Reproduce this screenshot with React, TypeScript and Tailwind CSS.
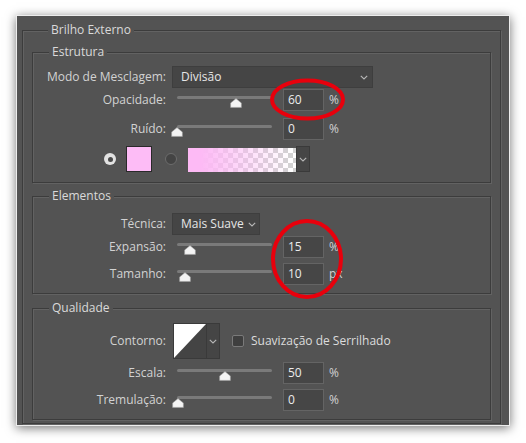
import type { ReactNode } from "react";

const font = { fontFamily: '"Open Sans", "Noto Sans", sans-serif' };

function Chevron({ className = "" }: { className?: string }) {
  return (
    <svg width="8" height="5" viewBox="0 0 8 5" className={className}>
      <path d="M0.8 0.8 L4 4 L7.2 0.8" fill="none" stroke="#b8b8b8" strokeWidth="1.1" />
    </svg>
  );
}

function Thumb({ x }: { x: number }) {
  return (
    <svg
      width="12"
      height="10"
      viewBox="0 0 12 10"
      className="absolute top-[9px]"
      style={{ left: x - 6 }}
    >
      <path d="M6 0.6 L11.4 5 L11.4 9.4 L0.6 9.4 L0.6 5 Z" fill="#f4f4f4" stroke="#9a9a9a" strokeWidth="0.6" strokeLinejoin="round" />
    </svg>
  );
}

function Label({ children }: { children?: ReactNode }) {
  return <span className="w-[133px] shrink-0 text-right text-[12px] text-[#d2d2d2]">{children}</span>;
}

function SliderRow({
  label,
  value,
  unit,
  thumb,
  className = "",
}: {
  label: string;
  value: string;
  unit: string;
  thumb: number;
  className?: string;
}) {
  return (
    <div className={`flex h-[22px] items-center ${className}`}>
      <Label>{label}</Label>
      <div className="relative ml-[6px] h-[22px] w-[106px]">
        <div className="absolute left-[5px] top-[7px] h-[3px] w-[95px] rounded-sm bg-[#7a7a7a]" />
        <Thumb x={thumb} />
      </div>
      <div className="ml-[5px] flex h-[22px] w-[41px] items-center border border-[#646464] bg-[#464646] pl-[4px] text-[12px] text-[#ececec]">
        {value}
      </div>
      <span className="ml-[5px] text-[12px] text-[#d2d2d2]">{unit}</span>
    </div>
  );
}

function Group({ title, children, className = "" }: { title: string; children: ReactNode; className?: string }) {
  return (
    <fieldset
      className={`border border-[#3c3c3c] shadow-[inset_1px_1px_0_#626262,1px_1px_0_#626262] ${className}`}
    >
      <legend className="ml-[16px] bg-[#535353] px-[3px] text-[12px] leading-[16px] text-[#dadada]">{title}</legend>
      {children}
    </fieldset>
  );
}

export default function App() {
  return (
    <div className="relative h-[443px] w-[526px] bg-white pl-[16px] pt-[15px]" style={font}>
      <div className="w-[494px] border border-[#ededed] bg-[#535353] pb-[1px] pt-[6px] shadow-[0_2px_10px_rgba(0,0,0,0.55)]">
        <fieldset className="ml-[5px] w-[479px] border border-[#3c3c3c] px-[9px] pb-[3px] shadow-[inset_1px_1px_0_#626262,1px_1px_0_#626262]">
          <legend className="ml-[16px] bg-[#535353] px-[3px] text-[12px] leading-[16px] text-[#dadada]">
            Brilho Externo
          </legend>

          {/* Estrutura */}
          <Group title="Estrutura" className="mt-[6px] pb-[10px]">
            <div className="mt-[6px] flex h-[22px] items-center">
              <Label>Modo de Mesclagem:</Label>
              <div className="ml-[6px] flex h-[22px] w-[201px] items-center justify-between border border-[#3e3e3e] bg-[#454545] pl-[8px] pr-[4px] text-[12px] text-[#e6e6e6]">
                <span>Divisão</span>
                <Chevron />
              </div>
            </div>
            <SliderRow label="Opacidade:" value="60" unit="%" thumb={64} className="mt-[1px]" />
            <SliderRow label="Ruído:" value="0" unit="%" thumb={5} className="mt-[7px]" />
            <div className="mt-[6px] flex h-[26px] items-center pl-[71px]">
              <div className="flex h-[12px] w-[12px] items-center justify-center rounded-full bg-[#e2e2e2]">
                <div className="h-[5px] w-[5px] rounded-full bg-[#4a4a4a]" />
              </div>
              <div className="ml-[10px] h-[26px] w-[26px] border border-[#2a2a2a] bg-[#fdbcf6]" />
              <div className="ml-[13px] h-[12px] w-[12px] rounded-full border border-[#6c6c6c] bg-[#444444]" />
              <div className="ml-[11px] flex h-[26px] items-stretch">
                <div className="mt-[2px] h-[24px] w-[108px] bg-[linear-gradient(to_right,#fdbaf5_12%,rgba(253,186,245,0)_96%),repeating-conic-gradient(#d2d2d2_0%_25%,#ffffff_0%_50%)] [background-size:100%_100%,10px_10px]" />
                <div className="flex w-[14px] items-center justify-center border border-[#3a3a3a] bg-[#464646]">
                  <Chevron />
                </div>
              </div>
            </div>
          </Group>

          {/* Elementos */}
          <Group title="Elementos" className="mt-[5px] pb-[8px]">
            <div className="mt-[9px] flex h-[22px] items-center">
              <Label>Técnica:</Label>
              <div className="ml-[6px] flex h-[22px] w-[88px] items-center justify-between border border-[#3e3e3e] bg-[#454545] pl-[8px] pr-[3px] text-[12px] text-[#e6e6e6]">
                <span>Mais Suave</span>
                <Chevron />
              </div>
            </div>
            <SliderRow label="Expansão:" value="15" unit="%" thumb={18} className="mt-[1px]" />
            <SliderRow label="Tamanho:" value="10" unit="px" thumb={13} className="mt-[5px]" />
          </Group>

          {/* Qualidade */}
          <Group title="Qualidade" className="mt-[6px] pb-[8px]">
            <div className="mt-[7px] flex h-[36px] items-center">
              <Label>Contorno:</Label>
              <div className="ml-[7px] flex h-[36px]">
                <div className="h-[36px] w-[34px] border border-[#3a3a3a] bg-[#444444]">
                  <svg width="32" height="34" viewBox="0 0 32 34" className="block">
                    <path d="M0 0 L32 0 L0 34 Z" fill="#ffffff" />
                  </svg>
                </div>
                <div className="flex w-[13px] items-center justify-center border border-l-0 border-[#3a3a3a] bg-[#454545]">
                  <Chevron />
                </div>
              </div>
              <div className="ml-[12px] h-[12px] w-[12px] rounded-[2px] border border-[#7a7a7a] bg-[#3f3f3f]" />
              <span className="ml-[7px] text-[12px] text-[#dcdcdc]">Suavização de Serrilhado</span>
            </div>
            <SliderRow label="Escala:" value="50" unit="%" thumb={53} className="mt-[3px]" />
            <SliderRow label="Tremulação:" value="0" unit="%" thumb={6} className="mt-[5px]" />
          </Group>
        </fieldset>
      </div>

      {/* red markup ellipses */}
      <svg className="pointer-events-none absolute left-0 top-0" width="526" height="443" viewBox="0 0 526 443">
        <ellipse cx="307.5" cy="99.5" rx="35.5" ry="19" fill="none" stroke="#e8000c" strokeWidth="4" />
        <ellipse cx="307" cy="259" rx="34" ry="38" fill="none" stroke="#e8000c" strokeWidth="4" />
      </svg>
    </div>
  );
}
